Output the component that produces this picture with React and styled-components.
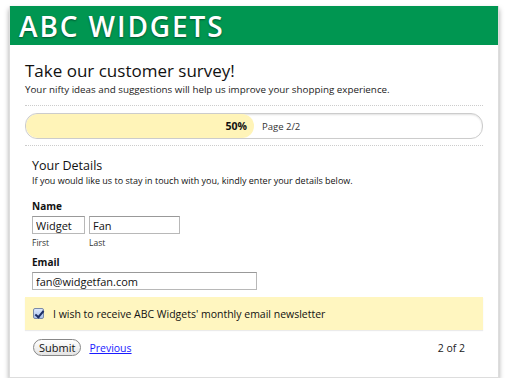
import React from "react";
import styled, { createGlobalStyle } from "styled-components";

const Global = createGlobalStyle`
  html, body { margin: 0; padding: 0; background: #fff; }
  body { font-family: "Open Sans", "DejaVu Sans", sans-serif; color: #111; }
`;

const Page = styled.div`
  padding: 6px 11px 0 9px;
`;

const Card = styled.div`
  width: 490px;
  height: 372px;
  box-sizing: border-box;
  background: #fff;
  border: 1px solid #ddd;
  border-top: none;
  box-shadow: 0 3px 5px rgba(0, 0, 0, 0.35);
`;

const Header = styled.div`
  background: #009651;
  height: 39px;
  display: flex;
  align-items: center;
  padding-left: 9px;
`;

const Logo = styled.h1`
  margin: 0;
  font-family: "Open Sans", sans-serif;
  font-weight: 600;
  font-size: 28px;
  letter-spacing: 1.9px;
  color: #fff;
  text-shadow: 0 1px 2px rgba(0, 0, 0, 0.45);
`;

const Body = styled.div`
  padding: 14px 15px 0 15px;
`;

const Title = styled.h2`
  margin: 0;
  font-size: 17px;
  font-weight: normal;
  line-height: 23px;
`;

const Lead = styled.p`
  margin: 1px 0 0;
  font-size: 9.8px;
  line-height: 14px;
  color: #222;
`;

const Rule = styled.div`
  border-top: 1px dotted #ccc;
  margin: ${(p) => p.$m || "0"};
`;

const Progress = styled.div`
  height: 24px;
  border: 1px solid #ccc;
  border-radius: 12px;
  box-shadow: inset 0 1px 2px rgba(0, 0, 0, 0.12);
  display: flex;
  align-items: center;
  overflow: hidden;
  margin: 7px 0 6px;
`;

const Fill = styled.div`
  height: 100%;
  background: #fff4b8;
  border-radius: 12px;
  display: flex;
  align-items: center;
  justify-content: flex-end;
  padding-right: 7px;
  box-sizing: border-box;
  font-size: 10.5px;
  font-weight: bold;
`;

const PageLabel = styled.span`
  font-size: 9.5px;
  margin-left: 8px;
  color: #333;
`;

const Section = styled.div`
  padding: 12px 7px 0;
`;

const SectionTitle = styled.h3`
  margin: 0;
  font-size: 12.5px;
  font-weight: normal;
  line-height: 16px;
`;

const Note = styled.p`
  margin: 1px 0 0;
  font-size: 9px;
  line-height: 12px;
`;

const Label = styled.div`
  font-size: 10px;
  font-weight: bold;
  line-height: 13px;
  margin: ${(p) => p.$top || "14px"} 0 3px;
`;

const Row = styled.div`
  display: flex;
  gap: 4px;
`;

const Field = styled.div`
  display: flex;
  flex-direction: column;
`;

const Input = styled.input`
  display: block;
  width: ${(p) => p.$w}px;
  height: 18px;
  box-sizing: border-box;
  border: 1px solid #b8b8b8;
  border-top-color: #999;
  padding: 0 3px;
  font-family: "Open Sans", sans-serif;
  font-size: 11px;
  color: #111;
  margin: 0;
`;

const Hint = styled.span`
  font-size: 8.5px;
  line-height: 10px;
  color: #333;
  margin-top: 4px;
`;

const Opt = styled.label`
  display: flex;
  align-items: center;
  gap: 9px;
  background: #fff6c0;
  height: 33px;
  margin: 7px -7px 0;
  padding: 0 8px;
  font-size: 10.5px;
  box-shadow: 0 1px 1px rgba(0, 0, 0, 0.08);
`;

const Check = styled.input`
  appearance: none;
  margin: 0;
  width: 11px;
  height: 11px;
  border: 1px solid #7a8aa8;
  border-radius: 2px;
  background: linear-gradient(#dbe7fb, #a9c2ec);
  position: relative;
  &:checked::after {
    content: "";
    position: absolute;
    left: 3px;
    top: 0px;
    width: 3px;
    height: 7px;
    border: solid #1c2f66;
    border-width: 0 2px 2px 0;
    transform: rotate(40deg);
  }
`;

const Footer = styled.div`
  display: flex;
  align-items: center;
  margin-top: 9px;
  padding: 0 11px 0 1px;
`;

const Button = styled.button`
  font-family: "Open Sans", sans-serif;
  font-size: 11px;
  height: 17px;
  line-height: 14px;
  padding: 0 5px;
  border: 1px solid #888;
  border-radius: 9px;
  background: linear-gradient(#fff, #e4e4e4);
  color: #111;
`;

const Link = styled.a`
  margin-left: 8px;
  font-size: 10.5px;
  color: #1a1aff;
  text-decoration: underline;
`;

const Count = styled.span`
  margin-left: auto;
  font-size: 10.5px;
  color: #222;
`;

export default function App() {
  return (
    <Page>
      <Global />
      <Card>
        <Header>
          <Logo>ABC WIDGETS</Logo>
        </Header>
        <Body>
          <Title>Take our customer survey!</Title>
          <Lead>Your nifty ideas and suggestions will help us improve your shopping experience.</Lead>
          <Rule $m="8px 0 0" />
          <Progress>
            <Fill style={{ width: "50%" }}>50%</Fill>
            <PageLabel>Page 2/2</PageLabel>
          </Progress>
          <Rule />
          <Section>
            <SectionTitle>Your Details</SectionTitle>
            <Note>If you would like us to stay in touch with you, kindly enter your details below.</Note>
            <Label $top="13px">Name</Label>
            <Row>
              <Field>
                <Input $w={53} defaultValue="Widget" />
                <Hint>First</Hint>
              </Field>
              <Field>
                <Input $w={91} defaultValue="Fan" />
                <Hint>Last</Hint>
              </Field>
            </Row>
            <Label $top="8px">Email</Label>
            <Input $w={225} defaultValue="fan@widgetfan.com" />
            <Opt>
              <Check type="checkbox" defaultChecked />
              I wish to receive ABC Widgets' monthly email newsletter
            </Opt>
            <Footer>
              <Button>Submit</Button>
              <Link href="#">Previous</Link>
              <Count>2 of 2</Count>
            </Footer>
          </Section>
        </Body>
      </Card>
    </Page>
  );
}
